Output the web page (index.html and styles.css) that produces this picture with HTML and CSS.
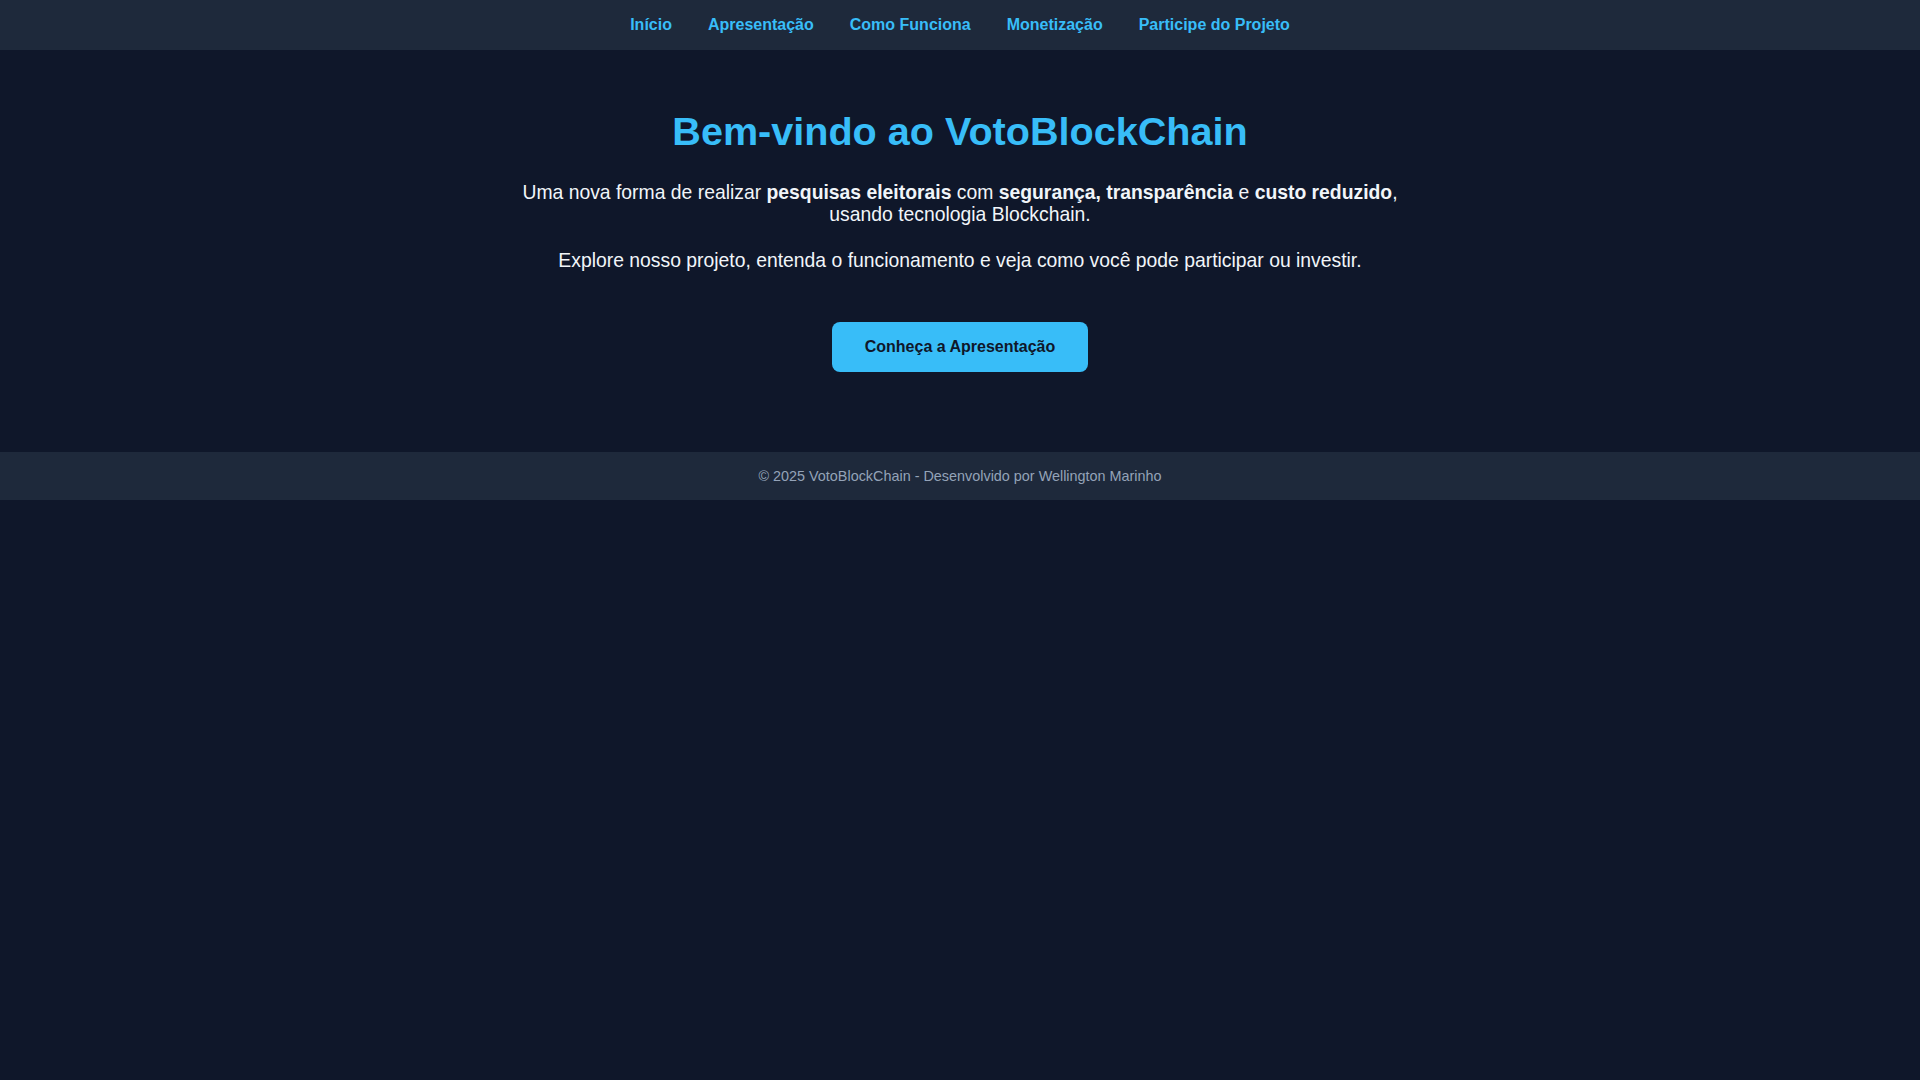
FILE: index.html
```html
<!DOCTYPE html>
<html lang="pt-BR">
<head>
    <meta charset="UTF-8">
    <meta name="viewport" content="width=device-width, initial-scale=1.0">
    <title>VotoBlockChain</title>
    <link rel="stylesheet" href="styles.css">
</head>
<body>
    <nav class="top-nav">
        <a href="#">Início</a>
        <a href="#">Apresentação</a>
        <a href="#">Como Funciona</a>
        <a href="#">Monetização</a>
        <a href="#">Participe do Projeto</a>
    </nav>

    <main class="hero">
        <h1>Bem-vindo ao VotoBlockChain</h1>
        <p>Uma nova forma de realizar <strong>pesquisas eleitorais</strong> com <strong>segurança, transparência</strong> e <strong>custo reduzido</strong>, usando tecnologia Blockchain.</p>
        <p>Explore nosso projeto, entenda o funcionamento e veja como você pode participar ou investir.</p>
        <div class="cta">
            <a href="#" class="btn">Conheça a Apresentação</a>
        </div>
    </main>

    <footer class="site-footer">
        &copy; 2025 VotoBlockChain - Desenvolvido por Wellington Marinho
    </footer>
</body>
</html>
```

FILE: styles.css
```css
body {
    font-family: "Liberation Sans", Arial, sans-serif;
    background-color: #0f172a;
    color: #f1f5f9;
    margin: 0;
}
.top-nav {
    background-color: #1e293b;
    display: flex;
    justify-content: center;
    gap: 36px;
    padding: 16px 0;
}
.top-nav a {
    color: #38bdf8;
    text-decoration: none;
    font-weight: bold;
    font-size: 16px;
}
.hero {
    text-align: center;
    padding: 32px 20px 80px;
}
.hero h1 {
    color: #38bdf8;
    font-size: 39.6px;
    margin: 27px 0;
}
.hero p {
    font-size: 19.35px;
    line-height: 22px;
    max-width: 900px;
    margin: 0 auto 24px;
}
.cta {
    margin-top: 51px;
}
.btn {
    display: inline-block;
    background-color: #38bdf8;
    color: #0f172a;
    font-weight: bold;
    font-size: 16px;
    text-decoration: none;
    padding: 16px 33px;
    border-radius: 8px;
}
.site-footer {
    background-color: #1e293b;
    color: #94a3b8;
    font-size: 0.9rem;
    text-align: center;
    padding: 16px 0;
}
```
